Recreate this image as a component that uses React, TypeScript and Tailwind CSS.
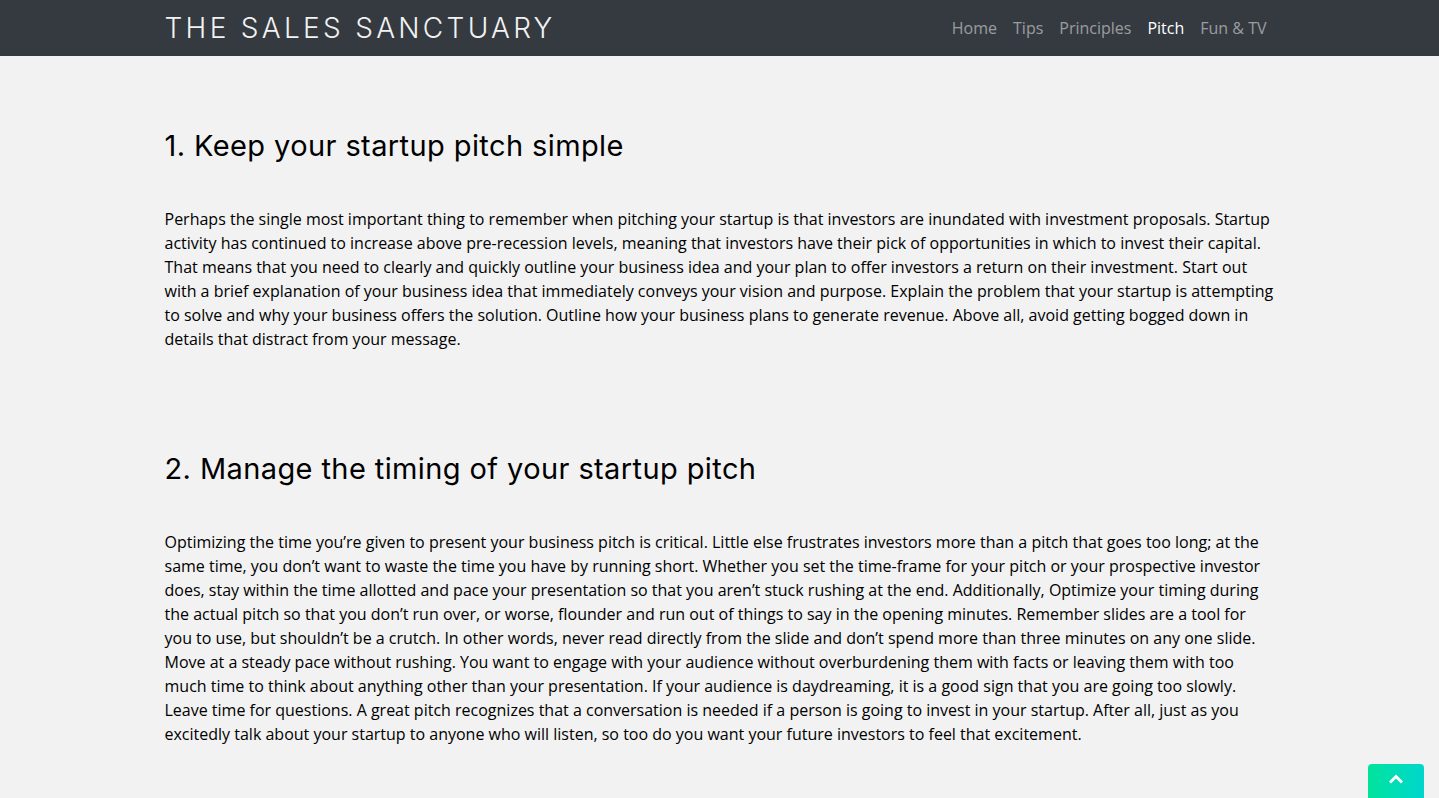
import React from "react";

const p1 =
  "Perhaps the single most important thing to remember when pitching your startup is that investors are inundated with investment proposals. Startup activity has continued to increase above pre-recession levels, meaning that investors have their pick of opportunities in which to invest their capital. That means that you need to clearly and quickly outline your business idea and your plan to offer investors a return on their investment. Start out with a brief explanation of your business idea that immediately conveys your vision and purpose. Explain the problem that your startup is attempting to solve and why your business offers the solution. Outline how your business plans to generate revenue. Above all, avoid getting bogged down in details that distract from your message.";

const p2 =
  "Optimizing the time you’re given to present your business pitch is critical. Little else frustrates investors more than a pitch that goes too long; at the same time, you don’t want to waste the time you have by running short. Whether you set the time-frame for your pitch or your prospective investor does, stay within the time allotted and pace your presentation so that you aren’t stuck rushing at the end. Additionally, Optimize your timing during the actual pitch so that you don’t run over, or worse, flounder and run out of things to say in the opening minutes. Remember slides are a tool for you to use, but shouldn’t be a crutch. In other words, never read directly from the slide and don’t spend more than three minutes on any one slide. Move at a steady pace without rushing. You want to engage with your audience without overburdening them with facts or leaving them with too much time to think about anything other than your presentation. If your audience is daydreaming, it is a good sign that you are going too slowly. Leave time for questions. A great pitch recognizes that a conversation is needed if a person is going to invest in your startup. After all, just as you excitedly talk about your startup to anyone who will listen, so too do you want your future investors to feel that excitement.";

export default function App() {
  return (
    <div className="min-h-[798px] bg-[#f2f2f2] font-['Open_Sans',sans-serif] text-black">
      <nav className="h-14 bg-[#343a40]">
        <div className="mx-auto flex h-full w-[1110px] items-center justify-between">
          <span className="font-['Inter',sans-serif] text-[28px] font-light tracking-[3.3px] text-[#f2f2f2]">
            THE SALES SANCTUARY
          </span>
          <ul className="flex items-center gap-0 text-base">
            {["Home", "Tips", "Principles", "Pitch", "Fun & TV"].map((l) => (
              <li
                key={l}
                className={
                  l === "Pitch"
                    ? "px-2 text-white"
                    : "px-2 text-[rgba(255,255,255,0.5)]"
                }
              >
                {l}
              </li>
            ))}
          </ul>
        </div>
      </nav>
      <main className="mx-auto w-[1110px] pt-[73px]">
        <h2 className="font-['Inter',sans-serif] text-[29px] font-normal leading-[34px] tracking-[0.4px]">
          1. Keep your startup pitch simple
        </h2>
        <p className="mt-[44px] text-base leading-6">{p1}</p>
        <h2 className="mt-[101px] font-['Inter',sans-serif] text-[29px] font-normal leading-[34px] tracking-[0.4px]">
          2. Manage the timing of your startup pitch
        </h2>
        <p className="mt-[44px] pb-12 text-base leading-6">{p2}</p>
      </main>
      <button className="fixed bottom-[-6px] right-[15px] flex h-10 w-14 items-start justify-center rounded-t bg-gradient-to-r from-[#00e49c] to-[#00d6cc] pt-[10px] text-white">
        <svg width="16" height="10" viewBox="0 0 16 10" fill="none">
          <path d="M2 8.5 L8 2.5 L14 8.5" stroke="white" strokeWidth="3" />
        </svg>
      </button>
    </div>
  );
}
